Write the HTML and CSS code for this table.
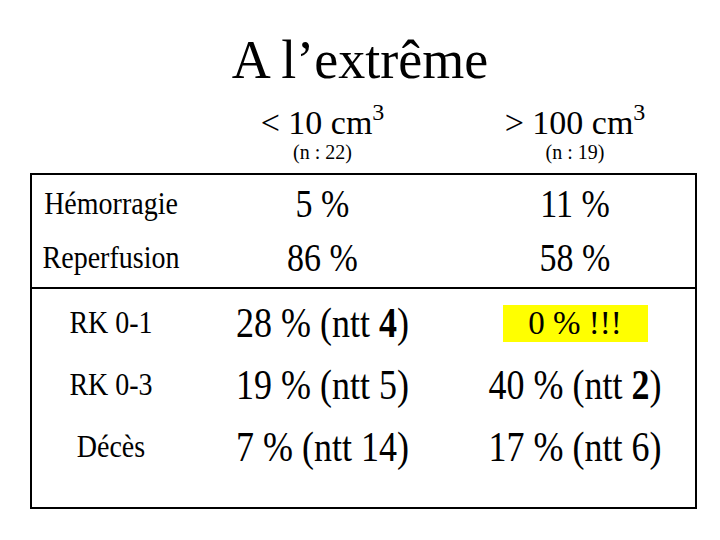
FILE: index.html
```html
<!DOCTYPE html>
<html lang="fr">
<head>
  <meta charset="UTF-8">
  <title>A l'extrême</title>
  <link rel="stylesheet" href="styles.css">
</head>
<body>

  <h1>A l’extrême</h1>

  <!-- column headings sit above the box -->
  <div class="heads">
    <div></div>
    <div class="head">
      <div class="vol">&lt; 10 cm<sup>3</sup></div>
      <div class="count">(n : 22)</div>
    </div>
    <div class="head">
      <div class="vol">&gt; 100 cm<sup>3</sup></div>
      <div class="count">(n : 19)</div>
    </div>
  </div>

  <div class="box">
    <div class="section top">
      <div class="label"><span>Hémorragie</span></div>
      <div class="val"><span>5 %</span></div>
      <div class="val"><span>11 %</span></div>

      <div class="label"><span>Reperfusion</span></div>
      <div class="val"><span>86 %</span></div>
      <div class="val"><span>58 %</span></div>
    </div>

    <div class="section bottom">
      <div class="label"><span>RK 0-1</span></div>
      <div class="val"><span>28 % (ntt <b>4</b>)</span></div>
      <div class="val"><span class="mark">0 % !!!</span></div>

      <div class="label"><span>RK 0-3</span></div>
      <div class="val"><span>19 % (ntt 5)</span></div>
      <div class="val"><span>40 % (ntt <b>2</b>)</span></div>

      <div class="label"><span>Décès</span></div>
      <div class="val"><span>7 % (ntt 14)</span></div>
      <div class="val"><span>17 % (ntt 6)</span></div>
    </div>
  </div>

</body>
</html>
```

FILE: styles.css
```css
body {
  font-family: "Liberation Serif", "Times New Roman", serif;
  background-color: #fff;
  color: #000;
  margin: 0;
  padding: 0;
}

h1 {
  font-size: 54px;
  font-weight: normal;
  line-height: 60px;
  text-align: center;
  margin: 30px 0 0;
}

.heads,
.section {
  display: grid;
  grid-template-columns: 158px 265px 1fr;
  text-align: center;
}

.heads {
  width: 667px;
  box-sizing: border-box;
  margin: 15px 0 0 30px;
  padding: 0 2px;
}

.vol {
  font-size: 34px;
  line-height: 36px;
}

.vol sup {
  font-size: 24px;
  line-height: 0;
  vertical-align: 14px;
}

.count {
  font-size: 20px;
  line-height: 22px;
}

/* main box with the two groups of rows */
.box {
  width: 667px;
  box-sizing: border-box;
  margin: 10px 0 0 30px;
  border: 2px solid #000;
}

.section.top {
  grid-auto-rows: 54px;
  padding: 2px 0;
  border-bottom: 2px solid #000;
}

.section.bottom {
  grid-auto-rows: 62px;
  padding: 3px 0 29px;
}

.label,
.val {
  display: flex;
  align-items: center;
  justify-content: center;
}

/* the slide text is a little taller than plain Times */
.label span,
.val span {
  display: inline-block;
  transform: scaleY(1.15);
}

.label {
  font-size: 28px;
}

.top .val {
  font-size: 34px;
}

.bottom .val {
  font-size: 36px;
}

.val .mark {
  width: 145px;
  height: 37px;
  line-height: 37px;
  font-size: 33px;
  transform: none;
  background-color: #ffff00;
}
```
